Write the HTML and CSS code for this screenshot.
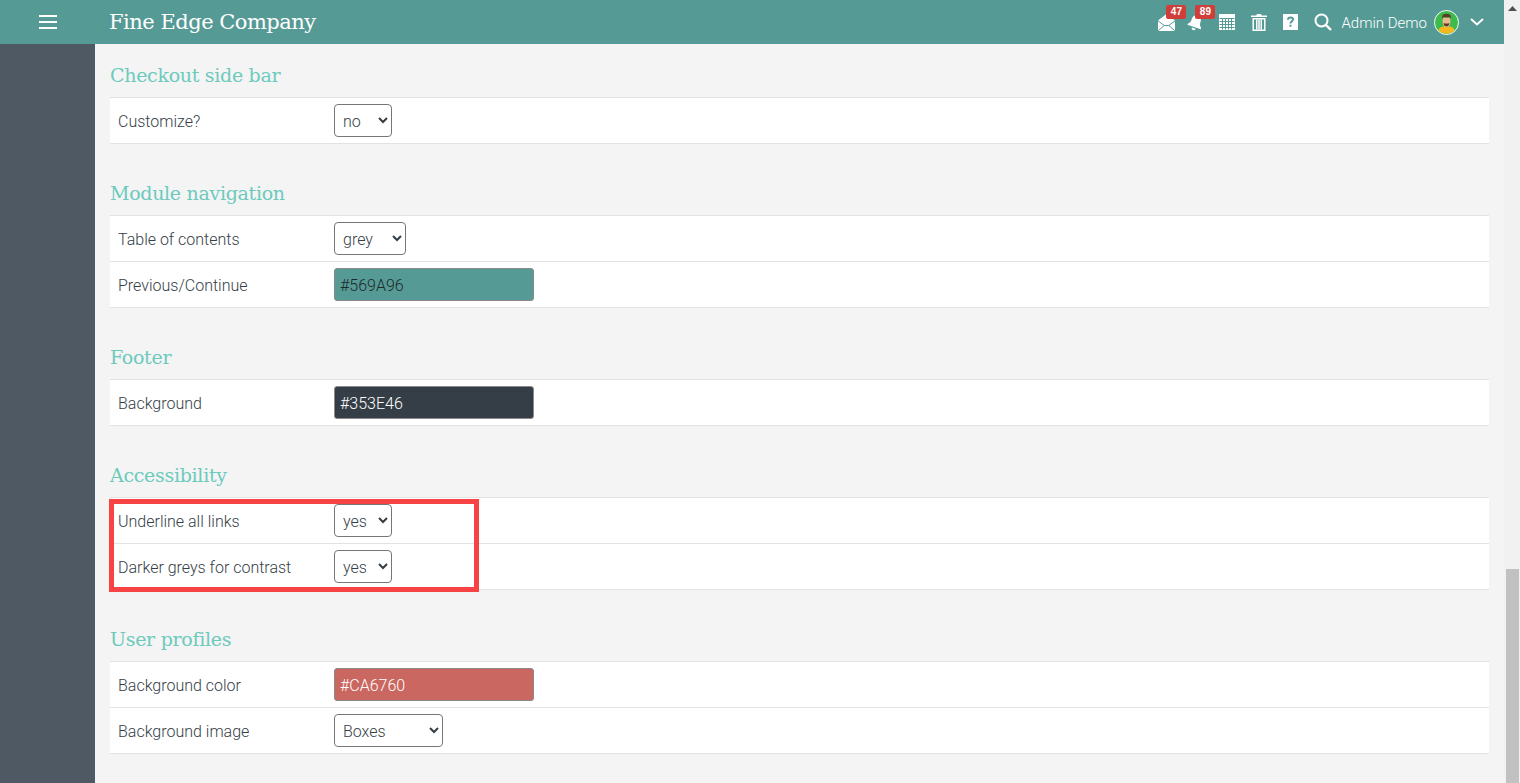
FILE: index.html
```html
<!DOCTYPE html>
<html lang="en">
<head>
<meta charset="utf-8">
<title>Fine Edge Company</title>
<link rel="stylesheet" href="styles.css">
</head>
<body>
<div class="page">
  <div class="main">
    <header class="topbar">
      <div class="burger-cell">
        <svg class="burger" width="18" height="14" viewBox="0 0 18 14"><path d="M0 1h18M0 7h18M0 13h18" stroke="#fff" stroke-width="2"/></svg>
      </div>
      <div class="brand">Fine Edge Company</div>
      <nav class="tools">
        <span class="tool tool-mail">
          <svg width="17" height="17" viewBox="0 0 17 17"><path fill="#fff" d="M8.500 0 17 6.500V15.500c0 .8-.6 1.500-1.400 1.500H1.400C.6 17 0 16.300 0 15.500V6.500z"/><path fill="none" stroke="#569a96" d="M0 6.800l6.200 4.700h4.600L17 6.800M.5 16.500l5.700-5M16.500 16.500l-5.700-5"/></svg>
          <span class="badge">47</span>
        </span>
        <span class="tool tool-bell">
          <svg width="17" height="17" viewBox="0 0 17 17"><g transform="rotate(18 8.500 8.500)"><path fill="#fff" d="M8.500 0c.8 0 1.300.5 1.300 1.300 2.300.6 3.300 2.600 3.300 5.200 0 2.800.7 4 2.400 5.500v1.200H1.500V12c1.700-1.500 2.400-2.700 2.400-5.500 0-2.600 1-4.600 3.300-5.200C7.200.5 7.700 0 8.500 0z"/><path fill="#fff" d="M6.500 14.300h4c0 1.400-.9 2.200-2 2.200s-2-.8-2-2.200z"/></g></svg>
          <span class="badge">89</span>
        </span>
        <span class="tool tool-cal">
          <svg width="16" height="16" viewBox="0 0 16 16"><path fill="#fff" d="M0 0h16v16H0z"/><path stroke="#569a96" d="M.5 4.500h15M.5 7.500h15M.5 10.500h15M.5 13.500h15M3.500 4v11.500M6.500 4v11.500M9.500 4v11.500M12.500 4v11.500" fill="none"/></svg>
        </span>
        <span class="tool tool-trash">
          <svg width="16" height="17" viewBox="0 0 16 17"><path fill="#fff" d="M6 0h4l.8 1.500H16V3H0V1.500h5.200zM1.500 4h13v13h-13zM3 5.500v10h10v-10z"/><path fill="#fff" d="M5 5.500h1.500v10H5zM7.250 5.500h1.500v10h-1.500zM9.500 5.500H11v10H9.500z"/></svg>
        </span>
        <span class="tool tool-help">
          <svg width="15" height="16" viewBox="0 0 15 16"><path fill="#fff" d="M0 0h15v16H0z"/><path fill="none" stroke="#569a96" stroke-width="2" d="M5 5.800c0-1.500 1-2.300 2.500-2.300S10 4.300 10 5.600c0 1.800-2.500 2-2.500 3.800"/><path fill="#569a96" d="M6.500 10.700h2v2h-2z"/></svg>
        </span>
        <span class="tool tool-search">
          <svg width="18" height="18" viewBox="0 0 18 18"><circle cx="7.500" cy="7.500" r="6" fill="none" stroke="#fff" stroke-width="2"/><path d="M11.800 11.800 17 17" stroke="#fff" stroke-width="2.400"/></svg>
        </span>
        <span class="user">Admin Demo</span>
        <svg class="avatar" width="25" height="25" viewBox="0 0 26 26">
          <circle cx="13" cy="13" r="12.500" fill="#3dba4e" stroke="#fff"/>
          <path fill="#f6b81c" d="M4.500 21c1-3 4-4 8.500-4s7.500 1 8.500 4a12 12 0 0 1-17 0z"/>
          <path fill="#e8b88e" d="M9 8h8v5c0 3-2 5-4 5s-4-2-4-5z"/>
          <path fill="#5d3a24" d="M8.500 10V7c0-2 2-3 4.500-3s4.500 1 4.500 3v3l-1-2.500h-7zM10 13.500c1 .8 5 .8 6 0 0 2.500-1.500 3.500-3 3.500s-3-1-3-3.500z"/>
        </svg>
        <svg class="chev" width="14" height="8" viewBox="0 0 14 8"><path d="M1 1l6 5.500L13 1" fill="none" stroke="#fff" stroke-width="2"/></svg>
      </nav>
    </header>
    <div class="body">
      <aside class="sidebar"></aside>
      <main class="content">
        <section class="group">
          <h2>Checkout side bar</h2>
          <div class="row"><label>Customize?</label><select class="sel sel-58"><option>no</option></select></div>
        </section>
        <section class="group">
          <h2>Module navigation</h2>
          <div class="row"><label>Table of contents</label><select class="sel sel-72"><option>grey</option></select></div>
          <div class="row"><label>Previous/Continue</label><input class="color c-teal" value="#569A96"></div>
        </section>
        <section class="group">
          <h2>Footer</h2>
          <div class="row"><label>Background</label><input class="color c-dark" value="#353E46"></div>
        </section>
        <section class="group">
          <h2>Accessibility</h2>
          <div class="highlighted">
            <div class="row"><label>Underline all links</label><select class="sel sel-58"><option>yes</option></select></div>
            <div class="row"><label>Darker greys for contrast</label><select class="sel sel-58"><option>yes</option></select></div>
            <div class="redbox"></div>
          </div>
        </section>
        <section class="group">
          <h2>User profiles</h2>
          <div class="row"><label>Background color</label><input class="color c-red" value="#CA6760"></div>
          <div class="row"><label>Background image</label><select class="sel sel-109"><option>Boxes</option></select></div>
        </section>
      </main>
    </div>
  </div>
  <div class="scrollbar">
    <svg class="arrow" width="9" height="5" viewBox="0 0 9 5"><path d="M4.500 0 9 5H0z" fill="#505050"/></svg>
    <div class="thumb"></div>
  </div>
</div>
</body>
</html>
```
FILE: styles.css
```css
* { box-sizing: border-box; }
html, body { margin: 0; height: 100%; overflow: hidden; }
body { font-family: Roboto, "Liberation Sans", sans-serif; background: #f4f4f4; color: #353e46; }
.page { display: flex; height: 783px; }
.main { flex: 1; display: flex; flex-direction: column; min-width: 0; }
.topbar { height: 44px; background: #569a96; display: flex; align-items: center; color: #fff; flex: none; }
.burger-cell { width: 95px; display: flex; justify-content: center; }
.brand { margin-left: 14px; font-family: "DejaVu Serif", serif; font-size: 21px; letter-spacing: -0.5px; }
.tools { margin-left: auto; display: flex; align-items: center; padding-right: 20px; }
.tool { position: relative; display: flex; }
.tool-mail { margin-right: 12px; }
.tool-bell { margin-right: 15px; }
.tool-cal { margin-right: 16px; }
.tool-trash { margin-right: 16px; }
.tool-help { margin-right: 16px; }
.tool-search { margin-right: 9px; }
.badge { position: absolute; left: 8px; top: -9px; width: 20px; text-align: center; background: #d13d38; color: #fff; font: bold 10px/14px "Liberation Sans", sans-serif; border-radius: 2px; }
.user { font-size: 15px; font-weight: 300; padding-top: 1px; }
.avatar { margin-left: 7px; }
.chev { margin-left: 11px; }
.body { flex: 1; display: flex; min-height: 0; }
.sidebar { width: 95px; background: #4f5963; flex: none; }
.content { flex: 1; padding: 20px 15px 0; min-width: 0; }
.group { margin-bottom: 38px; }
h2 { margin: 0; height: 33px; font: 400 19px/22px "DejaVu Serif", serif; letter-spacing: -0.3px; color: #6ccabd; }
.row { height: 46px; background: #fff; border-bottom: 1px solid #e2e2e2; display: flex; align-items: center; font-size: 16px; font-weight: 300; }
.group > .row:first-of-type, .highlighted > .row:first-child { height: 47px; border-top: 1px solid #e2e2e2; }
label { width: 224px; padding: 2px 0 0 8px; flex: none; }
.sel { height: 33px; font: 300 16px Roboto, sans-serif; color: #353e46; background-color: #fff; border: 1px solid #767676; border-radius: 4px; padding: 2px 4px 0; }
.sel-58 { width: 58px; }
.sel-72 { width: 72px; }
.sel-109 { width: 109px; }
.color { width: 200px; height: 33px; font: 300 16px Roboto, sans-serif; border: 1px solid #8a8a8a; border-radius: 3px; padding: 2px 5px 0; }
.c-teal { background: #569a96; color: #1c2a2a; }
.c-dark { background: #353e46; color: #fff; }
.c-red { background: #ca6760; color: #fff; }
.highlighted { position: relative; }
.redbox { position: absolute; left: -1px; top: 2px; width: 370px; height: 93px; border: 5px solid #f74343; pointer-events: none; }
.scrollbar { width: 16px; flex: none; background: #f1f1f1; position: relative; }
.arrow { position: absolute; left: 4px; top: 6px; }
.thumb { position: absolute; left: 2px; right: 1px; top: 569px; bottom: 0; background: #c1c1c1; }
```
